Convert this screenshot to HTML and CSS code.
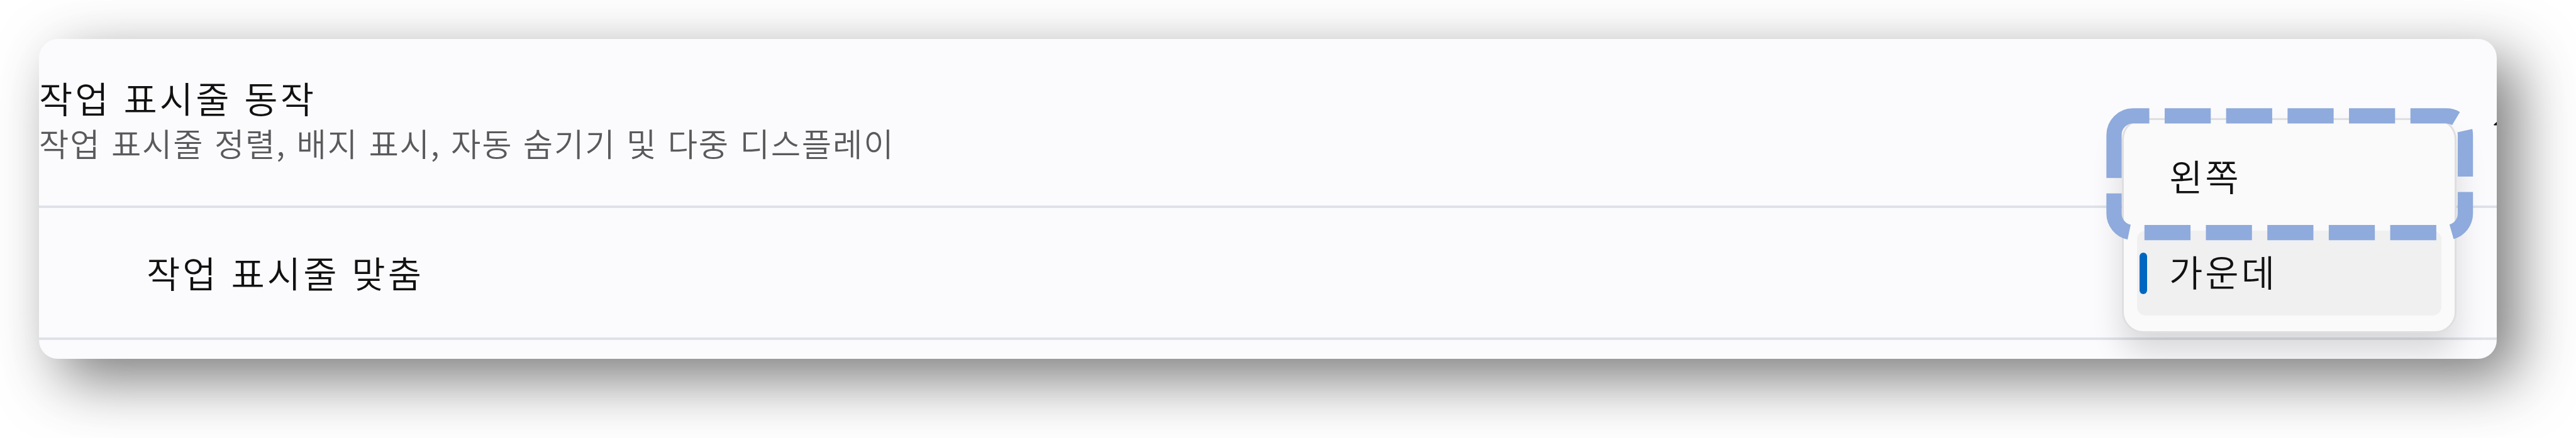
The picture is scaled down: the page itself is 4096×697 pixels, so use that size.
FILE: index.html
```html
<!DOCTYPE html>
<html lang="ko">
<head>
    <meta charset="UTF-8">
    <meta name="viewport" content="width=device-width, initial-scale=1.0">
    <title>작업 표시줄 동작</title>
    <link rel="stylesheet" href="styles.css">
</head>
<body>

    <div class="card">
        <div class="row header">
            <div class="text">
                <div class="title">작업 표시줄 동작</div>
                <div class="subtitle">작업 표시줄 정렬, 배지 표시, 자동 숨기기 및 다중 디스플레이</div>
            </div>
            <svg class="chevron" viewBox="0 0 5 6">
                <path d="M0 4.4 L5 0 V5.6 H0.8 Z" fill="#111"/>
            </svg>
        </div>
        <div class="row setting">
            <div class="title">작업 표시줄 맞춤</div>
        </div>

        <div class="menu">
            <div class="item">왼쪽</div>
            <div class="item selected">가운데</div>
        </div>

        <!-- highlight around the first option -->
        <svg class="highlight" viewBox="0 0 657 237">
            <path d="M14 48 A34 34 0 0 1 48 14 H609 A34 34 0 0 1 643 48 V189 A34 34 0 0 1 609 223 H48 A34 34 0 0 1 14 189 Z"/>
        </svg>
    </div>

</body>
</html>
```

FILE: styles.css
```css
body {
    box-sizing: border-box;
    height: 697px;
    margin: 0;
    padding: 62px;
    background-color: #fff;
    font-family: "Noto Sans CJK KR", sans-serif;
    font-weight: 350;
    color: #111;
    overflow: hidden;
}

.card {
    position: relative;
    width: 3908px;
    height: 509px;
    background-color: #fbfbfd;
    border-radius: 30px;
    box-shadow: 32px 32px 94px rgba(51, 51, 51, 0.65);
}

.row {
    display: flex;
    box-sizing: border-box;
    border-bottom: 4px solid #dfe2e8;
}

.header {
    height: 269px;
    justify-content: space-between;
    padding-top: 57px;
}

.setting {
    height: 210px;
    align-items: center;
    padding-left: 171px;
    padding-bottom: 3px;
}

.title {
    font-size: 58px;
    line-height: 72px;
    letter-spacing: 4px;
    word-spacing: -0.5px;
}

.subtitle {
    margin-top: 2px;
    font-size: 51.5px;
    line-height: 68px;
    letter-spacing: 1.8px;
    word-spacing: 0.3px;
    color: #5a5a5c;
}

.chevron {
    width: 5px;
    height: 6px;
    margin-top: 75px;
}

.menu {
    position: absolute;
    left: 3312px;
    top: 126px;
    display: flex;
    flex-direction: column;
    gap: 17px;
    box-sizing: border-box;
    width: 532px;
    height: 342px;
    padding: 24px 21px;
    border: 3px solid #dfdfe1;
    border-radius: 34px;
    background-color: #fafafa;
    box-shadow: 0 32px 50px rgba(0, 0, 0, 0.14);
    clip-path: inset(-60px -70px -41px -70px);
}

.item {
    position: relative;
    display: flex;
    align-items: center;
    box-sizing: border-box;
    height: 135px;
    padding-left: 51px;
    padding-bottom: 8px;
    border-radius: 14px;
    font-size: 58px;
    letter-spacing: 4px;
}

.selected {
    background-color: #f0f0f0;
}

.selected::before {
    content: "";
    position: absolute;
    left: 4px;
    top: 35px;
    width: 12px;
    height: 66px;
    border-radius: 6px;
    background-color: #0067c0;
}

.highlight {
    position: absolute;
    left: 3287px;
    top: 110px;
    width: 583.5px;
    height: 210.5px;
}

.highlight path {
    fill: none;
    stroke: #8faadc;
    stroke-width: 27.3;
    stroke-dasharray: 82.5 27.5;
}
```
